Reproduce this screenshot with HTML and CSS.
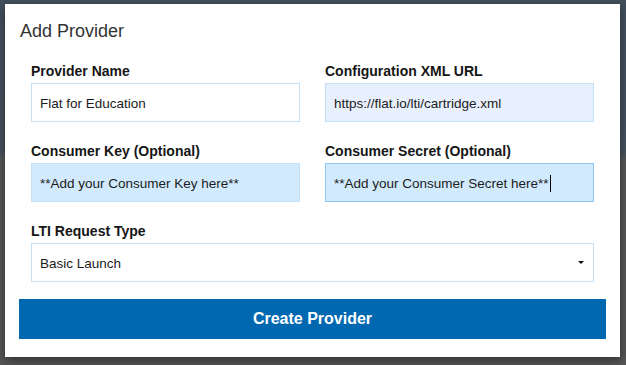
FILE: index.html
```html
<!DOCTYPE html>
<html lang="en">
<head>
    <meta charset="UTF-8">
    <meta name="viewport" content="width=device-width, initial-scale=1.0">
    <title>Add Provider</title>
    <link rel="stylesheet" href="styles.css">
</head>
<body>
    <div class="backdrop">
        <div class="modal">
            <h2 class="modal-title">Add Provider</h2>

            <form class="provider-form" onsubmit="return false">
                <div class="form-grid">
                    <div class="input-group">
                        <label for="providerName">Provider Name</label>
                        <input type="text" id="providerName" value="Flat for Education">
                    </div>

                    <div class="input-group">
                        <label for="configUrl">Configuration XML URL</label>
                        <input type="text" id="configUrl" class="autofilled" value="https://flat.io/lti/cartridge.xml">
                    </div>

                    <div class="input-group">
                        <label for="consumerKey">Consumer Key (Optional)</label>
                        <input type="text" id="consumerKey" class="highlighted" value="**Add your Consumer Key here**">
                    </div>

                    <div class="input-group">
                        <label for="consumerSecret">Consumer Secret (Optional)</label>
                        <div class="input-wrap">
                            <input type="text" id="consumerSecret" class="highlighted focused" value="**Add your Consumer Secret here**">
                            <span class="text-caret"></span>
                        </div>
                    </div>

                    <div class="input-group wide">
                        <label for="requestType">LTI Request Type</label>
                        <div class="select-wrap">
                            <select id="requestType">
                                <option>Basic Launch</option>
                                <option>Content Item Selection</option>
                            </select>
                        </div>
                    </div>
                </div>
            </form>

            <button class="create-btn" type="button">Create Provider</button>
        </div>
    </div>
</body>
</html>
```

FILE: styles.css
```css
:root {
    --text-color: #1c1c1c;
    --title-color: #333;
    --field-border: #c4e1f8;
    --field-focus: #8fc6f2;
    --field-highlight: #d1eafd;
    --field-autofill: #e8f0fd;
    --primary-color: #0067b1;
}

* {
    box-sizing: border-box;
    margin: 0;
    padding: 0;
}

body {
    font-family: 'Liberation Sans', Arial, Helvetica, sans-serif;
    color: var(--text-color);
    background: linear-gradient(180deg, #43505c 0, #45525e 150px, #575757 160px, #565656 100%);
    min-height: 100vh;
    overflow: hidden;
}

.backdrop {
    padding: 4px 6px 8px 5px;
}

.modal {
    background: #fff;
    width: 615px;
    height: 353px;
    padding: 16px 14px 18px;
    box-shadow: 0 3px 10px rgba(0, 0, 0, 0.45);
}

.modal-title {
    font-size: 18px;
    line-height: 22px;
    font-weight: 400;
    color: var(--title-color);
    margin-left: 1px;
}

.provider-form {
    padding: 21px 12px 0;
}

.form-grid {
    display: grid;
    grid-template-columns: 1fr 1fr;
    column-gap: 25px;
    row-gap: 21px;
}

.input-group.wide {
    grid-column: 1 / -1;
}

label {
    display: block;
    font-size: 14px;
    line-height: 17px;
    font-weight: 700;
    color: #161616;
    margin-bottom: 3px;
}

input,
select {
    display: block;
    width: 100%;
    height: 39px;
    padding: 2px 8px 0;
    border: 1px solid var(--field-border);
    border-radius: 0;
    background: #fff;
    font-family: inherit;
    font-size: 13.5px;
    color: var(--text-color);
    outline: none;
}

input.autofilled {
    background: var(--field-autofill);
}

input.highlighted {
    background: var(--field-highlight);
}

input.focused {
    border-color: var(--field-focus);
}

.input-wrap {
    position: relative;
}

.text-caret {
    position: absolute;
    left: 225px;
    top: 12px;
    width: 1px;
    height: 17px;
    background: #000;
}

.select-wrap {
    position: relative;
}

select {
    appearance: none;
    -webkit-appearance: none;
}

.select-wrap::after {
    content: "";
    position: absolute;
    right: 10px;
    top: 18px;
    border-left: 3px solid transparent;
    border-right: 3px solid transparent;
    border-top: 3px solid #111;
    pointer-events: none;
}

.create-btn {
    display: block;
    width: 100%;
    height: 40px;
    margin-top: 17px;
    border: none;
    background: var(--primary-color);
    color: #fff;
    font-family: inherit;
    font-size: 16px;
    font-weight: 700;
    cursor: pointer;
}

.create-btn:hover {
    background: #005a9c;
}
```
